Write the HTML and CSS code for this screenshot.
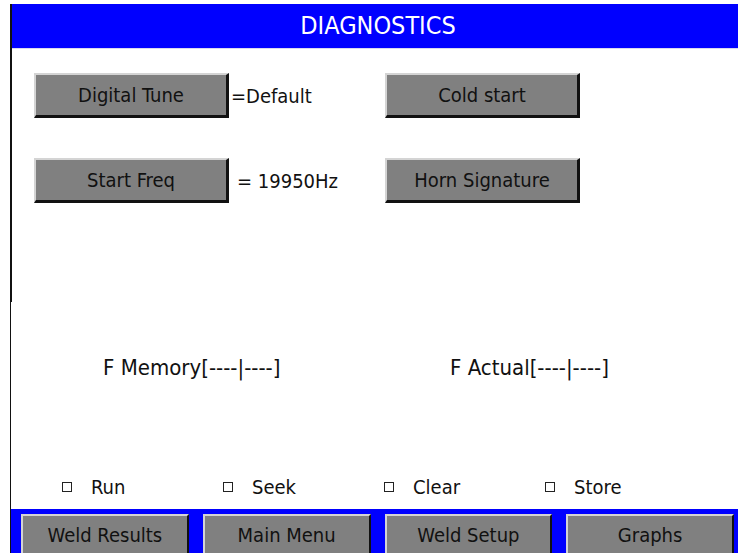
FILE: index.html
```html
<!DOCTYPE html>
<html lang="en">
<head>
    <meta charset="UTF-8">
    <meta name="viewport" content="width=device-width, initial-scale=1.0">
    <title>Diagnostics</title>
    <link rel="stylesheet" href="styles.css">
</head>
<body>
    <div class="screen">
        <div class="upper">
            <div class="title-bar">DIAGNOSTICS</div>

            <div class="controls">
                <button class="panel-btn">Digital Tune</button>
                <span class="value">=Default</span>
                <button class="panel-btn">Cold start</button>

                <button class="panel-btn">Start Freq</button>
                <span class="value value-freq">= 19950Hz</span>
                <button class="panel-btn">Horn Signature</button>
            </div>
        </div>

        <div class="lower">
            <div class="readings">
                <span class="reading">F Memory[----|----]</span>
                <span class="reading">F Actual[----|----]</span>
            </div>

            <div class="options">
                <label class="option"><span class="box"></span>Run</label>
                <label class="option"><span class="box"></span>Seek</label>
                <label class="option"><span class="box"></span>Clear</label>
                <label class="option"><span class="box"></span>Store</label>
            </div>
        </div>

        <div class="nav-bar">
            <button class="nav-btn">Weld Results</button>
            <button class="nav-btn">Main Menu</button>
            <button class="nav-btn">Weld Setup</button>
            <button class="nav-btn">Graphs</button>
        </div>
    </div>
</body>
</html>
```

FILE: styles.css
```css
body {
    font-family: "DejaVu Sans Condensed", "DejaVu Sans", sans-serif;
    font-stretch: condensed;
    margin: 0;
    padding: 4px 0 0 0;
    height: 553px;
    box-sizing: border-box;
    overflow: hidden;
    background-color: #fff;
    color: #111;
}
.screen {
    margin-left: 10px;
    border-left: 1px solid #111;
}
.upper {
    height: 298px;
    border-left: 1px solid #111;
}
.title-bar {
    height: 45px;
    line-height: 44px;
    background-color: #0000ff;
    color: #fff;
    text-align: center;
    font-size: 25px;
    padding-left: 6px;
    border-bottom: 1px solid #d8d8f0;
    box-sizing: border-box;
}
.controls {
    display: grid;
    grid-template-columns: 195px 156px 195px;
    grid-auto-rows: 45px;
    row-gap: 40px;
    padding: 24px 0 0 22px;
}
button {
    font-family: inherit;
    font-stretch: condensed;
    font-size: 20px;
    color: #111;
    background-color: #808080;
    border-style: solid;
    border-color: #d4d4d4 #111 #111 #d4d4d4;
    padding: 0;
    cursor: pointer;
}
.panel-btn {
    border-width: 2px 3px 3px 2px;
}
.value {
    align-self: center;
    font-size: 20px;
    padding-left: 2px;
}
.value-freq {
    padding-left: 8px;
}
.lower {
    height: 207px;
}
.readings {
    display: grid;
    grid-template-columns: 347px auto;
    padding: 54px 0 0 92px;
    font-size: 22px;
    line-height: 24px;
}
.options {
    display: grid;
    grid-template-columns: repeat(4, 161px);
    padding: 95px 0 0 51px;
    font-size: 20px;
    line-height: 24px;
}
.option {
    display: flex;
    align-items: center;
    gap: 19px;
}
.box {
    width: 8px;
    height: 8px;
    border: 1px solid #222;
    background: #fff;
}
.nav-bar {
    height: 44px;
    background-color: #0000ff;
    display: grid;
    grid-template-columns: repeat(4, 1fr);
    column-gap: 14px;
    padding: 5px 4px 0 10px;
    box-sizing: border-box;
    overflow: hidden;
}
.nav-btn {
    height: 42px;
    border-width: 2px 2px 2px 2px;
}
```
